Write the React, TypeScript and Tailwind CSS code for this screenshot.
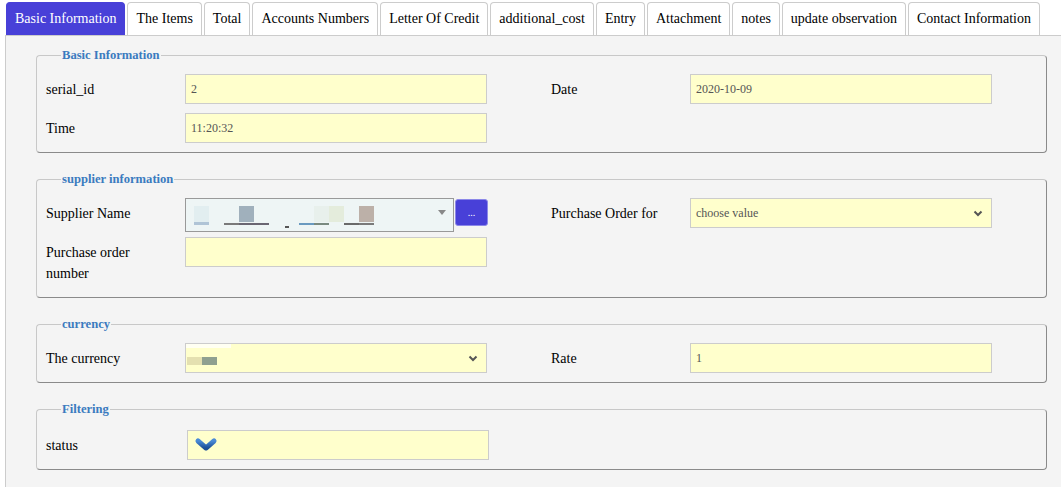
const tabs = [
    'Basic Information',
    'The Items',
    'Total',
    'Accounts Numbers',
    'Letter Of Credit',
    'additional_cost',
    'Entry',
    'Attachment',
    'notes',
    'update observation',
    'Contact Information',
];

const Chevron = () => (
    <svg width="10" height="7" viewBox="0 0 10 7" className="shrink-0">
        <path d="M1.5 1.5 L5 5 L8.5 1.5" fill="none" stroke="#555" strokeWidth="2" />
    </svg>
);

const Label = ({ children }: { children: React.ReactNode }) => (
    <div className="w-[139px] shrink-0 pt-[4.5px] pb-[4.5px] pr-[20px] text-[14px] leading-[21px] text-black">
        {children}
    </div>
);

const Box = ({ value, children }: { value?: string; children?: React.ReactNode }) => (
    <div className="w-[302px] h-[30px] shrink-0 flex items-center pl-[5px] pr-[8px] bg-[#ffffcc] border border-[#cccccc] text-[12px] text-[#555]">
        {value}
        {children}
    </div>
);

const Section = ({ title, last, top = 'pt-[11px]', children }: { title: string; last?: boolean; top?: string; children: React.ReactNode }) => (
    <fieldset
        className={`min-w-0 border border-[#c8c8c8] border-r-[#8a8a8a] border-b-[#8a8a8a] rounded-[4px] pl-[9px] ${top} ${last ? '' : 'mb-[18px]'}`}
    >
        <legend className="ml-[15px] px-[1px] text-[12.6px] leading-[16px] font-bold text-[#3b7bbf]">{title}</legend>
        {children}
    </fieldset>
);

const Row = ({ children }: { children: React.ReactNode }) => (
    <div className="flex items-start mb-[9px]">{children}</div>
);

const Col = ({ children }: { children?: React.ReactNode }) => (
    <div className="w-[505px] shrink-0 flex items-start">{children}</div>
);

const ColRight = ({ children }: { children?: React.ReactNode }) => (
    <div className="flex-1 min-w-0 flex items-start">{children}</div>
);

// pixelated (redacted) supplier name
const Redacted = () => (
    <svg width="190" height="24" viewBox="0 0 190 24" className="shrink-0">
        <rect x="0" y="0" width="15" height="16" fill="#e2eef0" />
        <rect x="0" y="16" width="15" height="3" fill="#b0c4d6" />
        <rect x="30" y="17" width="15" height="2" fill="#7a7a7a" />
        <rect x="45" y="0" width="15" height="16" fill="#a0b0bc" />
        <rect x="45" y="17" width="30" height="2" fill="#6a6672" />
        <rect x="91" y="20" width="4" height="2" fill="#555" />
        <rect x="105" y="17" width="15" height="2" fill="#6a9ac0" />
        <rect x="120" y="0" width="15" height="16" fill="#e8f0ec" />
        <rect x="120" y="17" width="15" height="2" fill="#7a8a80" />
        <rect x="135" y="0" width="15" height="16" fill="#e4ecdc" />
        <rect x="150" y="17" width="15" height="2" fill="#6a6a6a" />
        <rect x="165" y="0" width="15" height="16" fill="#bcb0a8" />
        <rect x="165" y="17" width="15" height="2" fill="#7a7a7a" />
    </svg>
);

export default function App() {
    return (
        <div className="min-h-screen bg-white font-['Liberation_Serif','Times_New_Roman',serif]">
            <div className="flex items-end gap-[2px] pt-[2px] pl-[6px] whitespace-nowrap">
                {tabs.map((tab, i) => (
                    <div
                        key={tab}
                        className={
                            i === 0
                                ? 'shrink-0 h-[33px] px-[8px] pb-[1px] flex items-center text-[14px] rounded-t-[4px] border border-b-0 border-[#4840d8] bg-[#4840d8] text-white'
                                : 'shrink-0 h-[33px] px-[8px] pb-[1px] flex items-center text-[14px] rounded-t-[4px] border border-b-0 border-[#cccccc] bg-white text-black'
                        }
                    >
                        {tab}
                    </div>
                ))}
            </div>

            <div className="ml-[5px] border-l border-t border-[#cccccc] bg-[#f4f4f4] pl-[30px] pr-[14px] pt-[11px] pb-[30px]">
                <Section title="Basic Information">
                    <Row>
                        <Col>
                            <Label>serial_id</Label>
                            <Box value="2" />
                        </Col>
                        <ColRight>
                            <Label>Date</Label>
                            <Box value="2020-10-09" />
                        </ColRight>
                    </Row>
                    <Row>
                        <Col>
                            <Label>Time</Label>
                            <Box value="11:20:32" />
                        </Col>
                    </Row>
                </Section>

                <Section title="supplier information">
                    <Row>
                        <Col>
                            <Label>Supplier Name</Label>
                            <div className="flex items-start h-[30px]">
                                <div className="w-[269px] h-[34px] flex items-start pt-[7px] pl-[8px] pr-[7px] bg-[#eef5f5] border border-[#999]">
                                    <Redacted />
                                    <span className="ml-auto mt-[4px] w-0 h-0 border-l-[4px] border-r-[4px] border-t-[5px] border-l-transparent border-r-transparent border-t-[#888]" />
                                </div>
                                <div className="ml-[1px] mt-[1px] w-[33px] h-[27px] flex items-center justify-center rounded-[3px] border border-[#8c88e8] bg-[#4840d8] text-white text-[10px] leading-none">
                                    ...
                                </div>
                            </div>
                        </Col>
                        <ColRight>
                            <Label>Purchase Order for</Label>
                            <Box>
                                <span>choose value</span>
                                <span className="ml-auto"><Chevron /></span>
                            </Box>
                        </ColRight>
                    </Row>
                    <Row>
                        <Col>
                            <Label>Purchase order number</Label>
                            <Box />
                        </Col>
                    </Row>
                </Section>

                <Section title="currency">
                    <Row>
                        <Col>
                            <Label>The currency</Label>
                            <div className="w-[302px] h-[30px] shrink-0 flex items-center pr-[8px] bg-[#ffffcc] border border-[#cccccc]">
                                <svg width="46" height="24" viewBox="0 0 46 24" className="self-start">
                                    <rect x="0" y="0" width="45" height="4" fill="#fffff2" />
                                    <rect x="1" y="13" width="15" height="8" fill="#e4e0b0" />
                                    <rect x="16" y="13" width="15" height="8" fill="#8fa090" />
                                </svg>
                                <span className="ml-auto"><Chevron /></span>
                            </div>
                        </Col>
                        <ColRight>
                            <Label>Rate</Label>
                            <Box value="1" />
                        </ColRight>
                    </Row>
                </Section>

                <Section title="Filtering" last top="pt-[13px]">
                    <Row>
                        <Col>
                            <Label>status</Label>
                            <div className="ml-[2px]">
                                <Box>
                                    <svg width="24" height="16" viewBox="0 0 24 16" className="ml-[1px]">
                                        <defs>
                                            <linearGradient id="chev" x1="0" y1="0" x2="0" y2="1">
                                                <stop offset="0" stopColor="#4a8ad6" />
                                                <stop offset="1" stopColor="#1d4f96" />
                                            </linearGradient>
                                        </defs>
                                        <path d="M4 4 L12 11 L20 4" fill="none" stroke="url(#chev)" strokeWidth="5" strokeLinecap="round" strokeLinejoin="round" />
                                    </svg>
                                </Box>
                            </div>
                        </Col>
                    </Row>
                </Section>
            </div>
        </div>
    );
}
